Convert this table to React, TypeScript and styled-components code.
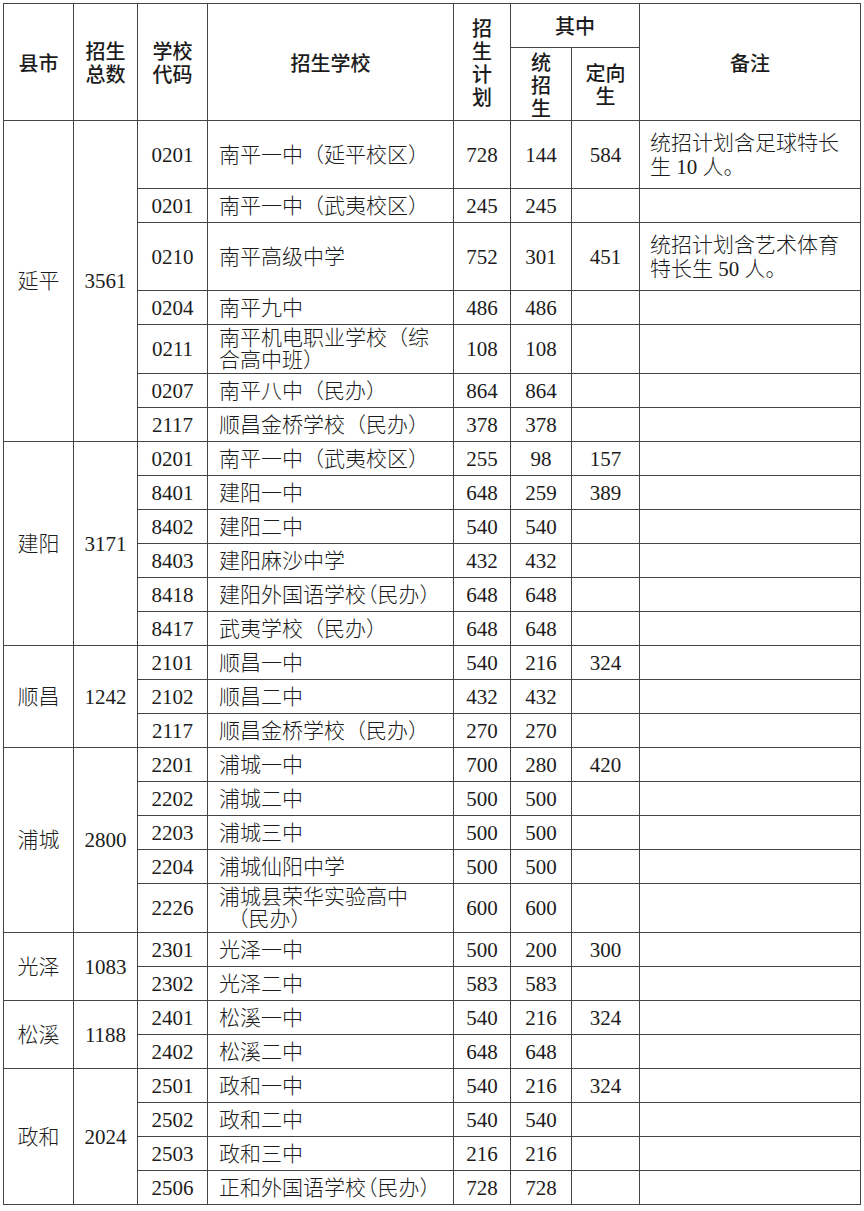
import React from "react";
import styled, { createGlobalStyle } from "styled-components";

type RowSize = "std" | "two" | "note";

type School = {
  code: string;
  name: React.ReactNode;
  plan: number;
  unified: number;
  directed?: number;
  note?: string;
  size?: RowSize;
};

type District = {
  name: string;
  total: number;
  schools: School[];
};

const GlobalStyle = createGlobalStyle`
  html, body {
    margin: 0;
    padding: 0;
    background: #fff;
  }
`;

const Page = styled.div`
  padding: 3px 0 0 3px;
  width: 864px;
  box-sizing: border-box;
`;

const Table = styled.table`
  border-collapse: collapse;
  table-layout: fixed;
  width: 857px;
  color: #1c1c1c;
  font-family: "Liberation Serif", "Noto Sans CJK SC", serif;
  font-size: 21px;
  font-weight: 300;
`;

const HeadRow = styled.tr<{ $h: number }>`
  height: ${({ $h }) => $h}px;
`;

const Th = styled.th`
  border: 1px solid #444;
  padding: 0;
  font-family: "Noto Sans CJK SC", sans-serif;
  font-weight: 500;
  font-size: 20px;
  line-height: 23px;
  text-align: center;
  vertical-align: middle;
`;

const heights: Record<RowSize, number> = { std: 34, two: 49, note: 68 };

const Row = styled.tr<{ $size: RowSize }>`
  height: ${({ $size }) => heights[$size]}px;
`;

const Cell = styled.td`
  border: 1px solid #444;
  padding: 0;
  text-align: center;
  vertical-align: middle;
  line-height: 22px;
`;

const NameCell = styled(Cell)`
  text-align: left;
  padding: 0 11px;
`;

const NoteCell = styled(Cell)`
  text-align: left;
  padding: 0 8px 0 10px;
  line-height: 24px;
`;

// word-style compressed opening bracket for the long names
const Tight = styled.span`
  margin-left: -0.45em;
`;

// keeps the full-width bracket space at the start of a wrapped line
const Lead = styled.span`
  padding-left: 0.4em;
`;

const data: District[] = [
  {
    name: "延平",
    total: 3561,
    schools: [
      { code: "0201", name: "南平一中（延平校区）", plan: 728, unified: 144, directed: 584, note: "统招计划含足球特长生 10 人。", size: "note" },
      { code: "0201", name: "南平一中（武夷校区）", plan: 245, unified: 245 },
      { code: "0210", name: "南平高级中学", plan: 752, unified: 301, directed: 451, note: "统招计划含艺术体育特长生 50 人。", size: "note" },
      { code: "0204", name: "南平九中", plan: 486, unified: 486 },
      { code: "0211", name: "南平机电职业学校（综合高中班）", plan: 108, unified: 108, size: "two" },
      { code: "0207", name: "南平八中（民办）", plan: 864, unified: 864 },
      { code: "2117", name: "顺昌金桥学校（民办）", plan: 378, unified: 378 },
    ],
  },
  {
    name: "建阳",
    total: 3171,
    schools: [
      { code: "0201", name: "南平一中（武夷校区）", plan: 255, unified: 98, directed: 157 },
      { code: "8401", name: "建阳一中", plan: 648, unified: 259, directed: 389 },
      { code: "8402", name: "建阳二中", plan: 540, unified: 540 },
      { code: "8403", name: "建阳麻沙中学", plan: 432, unified: 432 },
      { code: "8418", name: <>建阳外国语学校<Tight>（</Tight>民办）</>, plan: 648, unified: 648 },
      { code: "8417", name: "武夷学校（民办）", plan: 648, unified: 648 },
    ],
  },
  {
    name: "顺昌",
    total: 1242,
    schools: [
      { code: "2101", name: "顺昌一中", plan: 540, unified: 216, directed: 324 },
      { code: "2102", name: "顺昌二中", plan: 432, unified: 432 },
      { code: "2117", name: "顺昌金桥学校（民办）", plan: 270, unified: 270 },
    ],
  },
  {
    name: "浦城",
    total: 2800,
    schools: [
      { code: "2201", name: "浦城一中", plan: 700, unified: 280, directed: 420 },
      { code: "2202", name: "浦城二中", plan: 500, unified: 500 },
      { code: "2203", name: "浦城三中", plan: 500, unified: 500 },
      { code: "2204", name: "浦城仙阳中学", plan: 500, unified: 500 },
      { code: "2226", name: <>浦城县荣华实验高中<br /><Lead>（民办）</Lead></>, plan: 600, unified: 600, size: "two" },
    ],
  },
  {
    name: "光泽",
    total: 1083,
    schools: [
      { code: "2301", name: "光泽一中", plan: 500, unified: 200, directed: 300 },
      { code: "2302", name: "光泽二中", plan: 583, unified: 583 },
    ],
  },
  {
    name: "松溪",
    total: 1188,
    schools: [
      { code: "2401", name: "松溪一中", plan: 540, unified: 216, directed: 324 },
      { code: "2402", name: "松溪二中", plan: 648, unified: 648 },
    ],
  },
  {
    name: "政和",
    total: 2024,
    schools: [
      { code: "2501", name: "政和一中", plan: 540, unified: 216, directed: 324 },
      { code: "2502", name: "政和二中", plan: 540, unified: 540 },
      { code: "2503", name: "政和三中", plan: 216, unified: 216 },
      { code: "2506", name: <>正和外国语学校<Tight>（</Tight>民办）</>, plan: 728, unified: 728 },
    ],
  },
];

const widths = [70, 64, 70, 246, 57, 61, 68, 221];

export default function App() {
  return (
    <Page>
      <GlobalStyle />
      <Table>
        <colgroup>
          {widths.map((w, i) => (
            <col key={i} style={{ width: w }} />
          ))}
        </colgroup>
        <thead>
          <HeadRow $h={44}>
            <Th rowSpan={2}>县市</Th>
            <Th rowSpan={2}>招生<br />总数</Th>
            <Th rowSpan={2}>学校<br />代码</Th>
            <Th rowSpan={2}>招生学校</Th>
            <Th rowSpan={2}>招<br />生<br />计<br />划</Th>
            <Th colSpan={2}>其中</Th>
            <Th rowSpan={2}>备注</Th>
          </HeadRow>
          <HeadRow $h={73}>
            <Th>统<br />招<br />生</Th>
            <Th>定向<br />生</Th>
          </HeadRow>
        </thead>
        <tbody>
          {data.map((d) =>
            d.schools.map((s, i) => (
              <Row key={d.name + i} $size={s.size ?? "std"}>
                {i === 0 && (
                  <>
                    <Cell rowSpan={d.schools.length}>{d.name}</Cell>
                    <Cell rowSpan={d.schools.length}>{d.total}</Cell>
                  </>
                )}
                <Cell>{s.code}</Cell>
                <NameCell>{s.name}</NameCell>
                <Cell>{s.plan}</Cell>
                <Cell>{s.unified}</Cell>
                <Cell>{s.directed ?? ""}</Cell>
                <NoteCell>{s.note ?? ""}</NoteCell>
              </Row>
            ))
          )}
        </tbody>
      </Table>
    </Page>
  );
}
